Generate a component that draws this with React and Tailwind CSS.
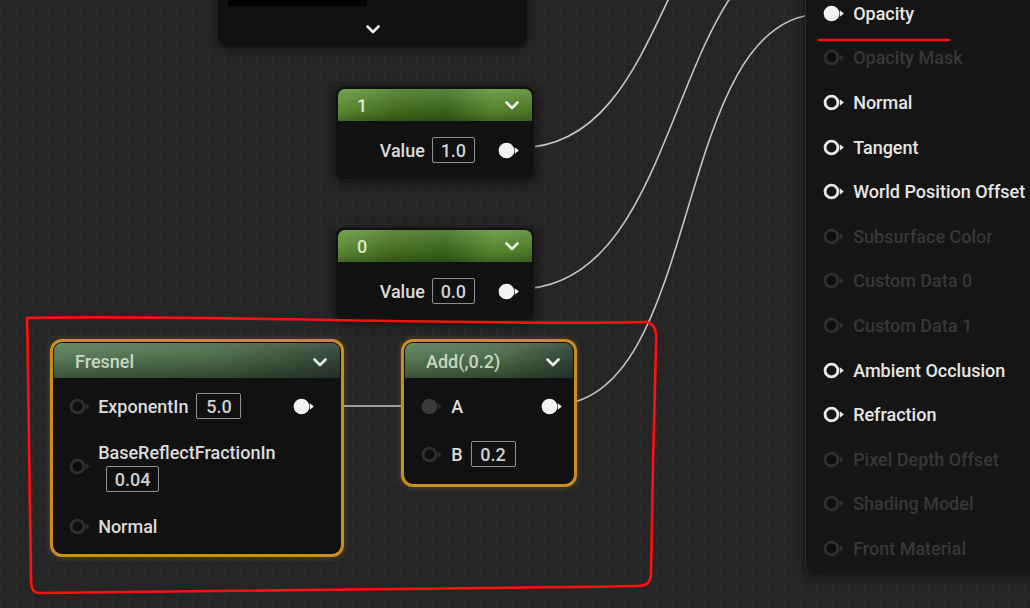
import React from "react";

function Pin({ kind = "ring", size = 19 }) {
  const styles = {
    filled: { fill: "#f2f2f2", stroke: "#f2f2f2", tri: "#f2f2f2" },
    ring: { fill: "#141414", stroke: "#e8e8e8", tri: "#e8e8e8" },
    dim: { fill: "#0e0e0e", stroke: "#2f2f2f", tri: "#2f2f2f" },
    darkfill: { fill: "#3a3a3a", stroke: "#3a3a3a", tri: "#2a2a2a" },
  }[kind];
  return (
    <svg width={(size * 22) / 16} height={size} viewBox="0 0 22 16" className="shrink-0">
      <circle cx="8" cy="8" r={kind === "filled" ? 6.6 : 5.4} fill={styles.fill} stroke={styles.stroke} strokeWidth={kind === "filled" ? 0 : 2.4} />
      <path d="M15 5.2 L18.4 8 L15 10.8 Z" fill={styles.tri} />
    </svg>
  );
}

function Chevron({ className = "" }) {
  return (
    <svg width="16" height="12" viewBox="0 0 16 12" className={className}>
      <path d="M2.5 3.5 L8 9 L13.5 3.5" fill="none" stroke="#f0f0f0" strokeWidth="2.6" strokeLinecap="round" strokeLinejoin="round" />
    </svg>
  );
}

function Box({ children, className = "" }) {
  return (
    <div className={"flex h-[26px] items-center justify-center rounded-[2px] border-[1.5px] border-[#8f8f8f] px-[4px] text-[#d0d0d0] " + className}>
      {children}
    </div>
  );
}

function ConstNode({ top, title, value }) {
  return (
    <div
      className="absolute left-[335px] flex h-[94px] w-[200px] flex-col overflow-hidden rounded-[9px] border border-[#1d1d1d] bg-[#111111] shadow-[0_2px_8px_rgba(0,0,0,0.6)]"
      style={{ top }}
    >
      <div className="m-[2px] mb-0 flex h-[32px] items-center justify-between rounded-t-[7px] px-[19px] pr-[12px] text-[18px] font-medium text-[#dbe8cf] [background-image:linear-gradient(180deg,rgba(255,255,255,0.14),rgba(0,0,0,0.1)_70%,rgba(0,0,0,0.3)),linear-gradient(90deg,#639536,#48761f_30%,#3d6c1c_55%,#5e9131_80%,#518329)]">
        <span>{title}</span>
        <Chevron />
      </div>
      <div className="flex flex-1 items-center justify-end pr-[11px] text-[18px] font-medium text-[#dcdcdc]">
        <span>Value</span>
        <Box className="ml-[7px] w-[43px]">{value}</Box>
        <span className="ml-[22px]">
          <Pin kind="filled" />
        </span>
      </div>
    </div>
  );
}

function FunctionHeader({ title }) {
  return (
    <div className="flex h-[35px] items-center justify-between rounded-t-[8px] px-[21px] pr-[12px] pt-[2px] text-[18px] font-medium text-[#c9d6c2] [background-image:linear-gradient(180deg,rgba(255,255,255,0.1),rgba(0,0,0,0)_40%,rgba(0,0,0,0.35)),linear-gradient(90deg,#5a7c57,#4d6d4a_55%,#3c523b_85%,#33443a)]">
      <span>{title}</span>
      <Chevron />
    </div>
  );
}

const outputs = [
  ["Opacity", "filled"],
  ["Opacity Mask", "dim"],
  ["Normal", "ring"],
  ["Tangent", "ring"],
  ["World Position Offset", "ring"],
  ["Subsurface Color", "dim"],
  ["Custom Data 0", "dim"],
  ["Custom Data 1", "dim"],
  ["Ambient Occlusion", "ring"],
  ["Refraction", "ring"],
  ["Pixel Depth Offset", "dim"],
  ["Shading Model", "dim"],
  ["Front Material", "dim"],
];

export default function App() {
  return (
    <div
      className="relative h-[608px] w-[1030px] overflow-hidden bg-[#252525] [background-image:linear-gradient(#2a2a2a_1px,transparent_1px),linear-gradient(90deg,#2a2a2a_1px,transparent_1px)] [background-size:16px_16px]"
      style={{ fontFamily: "Roboto, 'Noto Sans', sans-serif" }}
    >
      {/* wires */}
      <svg className="absolute left-0 top-0" width="1030" height="608">
        <g fill="none" stroke="#c4c4c4" strokeWidth="1.6">
          <path d="M518 148 C 680 148, 655 -148, 822 -148" />
          <path d="M518 289 C 690 289, 665 -60, 822 -60" />
          <path d="M553 405 C 705 405, 670 14, 822 14" />
          <path d="M320 406 L 428 406" />
        </g>
      </svg>

      {/* top node (cut off) */}
      <div className="absolute left-[218px] top-[-30px] h-[76px] w-[309px] rounded-[9px] bg-[#111111] shadow-[0_2px_8px_rgba(0,0,0,0.6)]">
        <div className="ml-[10px] h-[36px] w-[139px] bg-[#030303]" />
        <div className="ml-[147px] mt-[17px] w-[16px]">
          <Chevron />
        </div>
      </div>

      <ConstNode top={86} title="1" value="1.0" />
      <ConstNode top={227} title="0" value="0.0" />

      {/* Fresnel */}
      <div className="absolute left-[50px] top-[339px] h-[218px] w-[294px] rounded-[12px] border-[3px] border-[#c98d22] bg-[#0d0d0d] p-[1px] shadow-[0_0_6px_rgba(200,140,30,0.35)]">
        <div className="flex h-full flex-col rounded-[9px] bg-[#111111]">
          <FunctionHeader title="Fresnel" />
          <div className="relative flex flex-1 flex-col px-[14px] pt-[15px] text-[18px] font-medium text-[#dcdcdc]">
            <div className="flex h-[26px] items-center">
              <Pin kind="dim" />
              <span className="ml-[4px]">ExponentIn</span>
              <Box className="ml-[8px] w-[45px]">5.0</Box>
              <span className="ml-auto mr-[8px]">
                <Pin kind="filled" />
              </span>
            </div>
            <div className="mt-[22px] flex items-center">
              <Pin kind="dim" />
              <div className="ml-[4px] flex flex-col">
                <span className="h-[24px] leading-[24px]">BaseReflectFractionIn</span>
                <Box className="ml-[8px] mt-[1px] w-[53px]">0.04</Box>
              </div>
            </div>
            <div className="mt-[22px] flex h-[24px] items-center">
              <Pin kind="dim" />
              <span className="ml-[4px]">Normal</span>
            </div>
          </div>
        </div>
      </div>

      {/* Add */}
      <div className="absolute left-[401px] top-[339px] h-[148px] w-[176px] rounded-[12px] border-[3px] border-[#c98d22] bg-[#0d0d0d] p-[1px] shadow-[0_0_6px_rgba(200,140,30,0.35)]">
        <div className="flex h-full flex-col rounded-[9px] bg-[#111111]">
          <FunctionHeader title="Add(,0.2)" />
          <div className="flex flex-1 flex-col px-[15px] pt-[15px] text-[18px] font-medium text-[#dcdcdc]">
            <div className="flex h-[26px] items-center">
              <Pin kind="darkfill" />
              <span className="ml-[5px]">A</span>
              <span className="ml-auto mr-[-8px]">
                <Pin kind="filled" />
              </span>
            </div>
            <div className="mt-[22px] flex h-[26px] items-center">
              <Pin kind="dim" />
              <span className="ml-[5px]">B</span>
              <Box className="ml-[8px] w-[45px]">0.2</Box>
            </div>
          </div>
        </div>
      </div>

      {/* Result node outputs panel */}
      <div className="absolute left-[805px] top-[-30px] h-[603px] w-[240px] rounded-[9px] border-l border-[#2e2e2e] bg-[#151515] pt-[21px] shadow-[0_2px_10px_rgba(0,0,0,0.6)]">
        {outputs.map(([label, kind]) => (
          <div key={label} className="flex h-[44.6px] items-center pl-[16px]">
            <Pin kind={kind} />
            <span
              className={
                "ml-[5px] whitespace-nowrap text-[18px] font-medium " +
                (kind === "dim" ? "text-[#383838]" : "text-[#e6e6e6]")
              }
            >
              {label}
            </span>
          </div>
        ))}
      </div>

      {/* red annotations */}
      <svg className="pointer-events-none absolute left-0 top-0" width="1030" height="608">
        <g fill="none" stroke="#ff1010" strokeWidth="2.6" strokeLinecap="round" strokeLinejoin="round">
          <path d="M28 318 C 180 314, 480 326, 646 322 C 656 324, 657 332, 656 345 C 654 420, 652 500, 651 575 C 650 584, 646 586, 636 586 C 420 590, 200 592, 40 593 C 32 593, 31 588, 31 578 C 30 480, 29 400, 27 318" />
          <path d="M819 40 L 949 40" />
        </g>
      </svg>
    </div>
  );
}
